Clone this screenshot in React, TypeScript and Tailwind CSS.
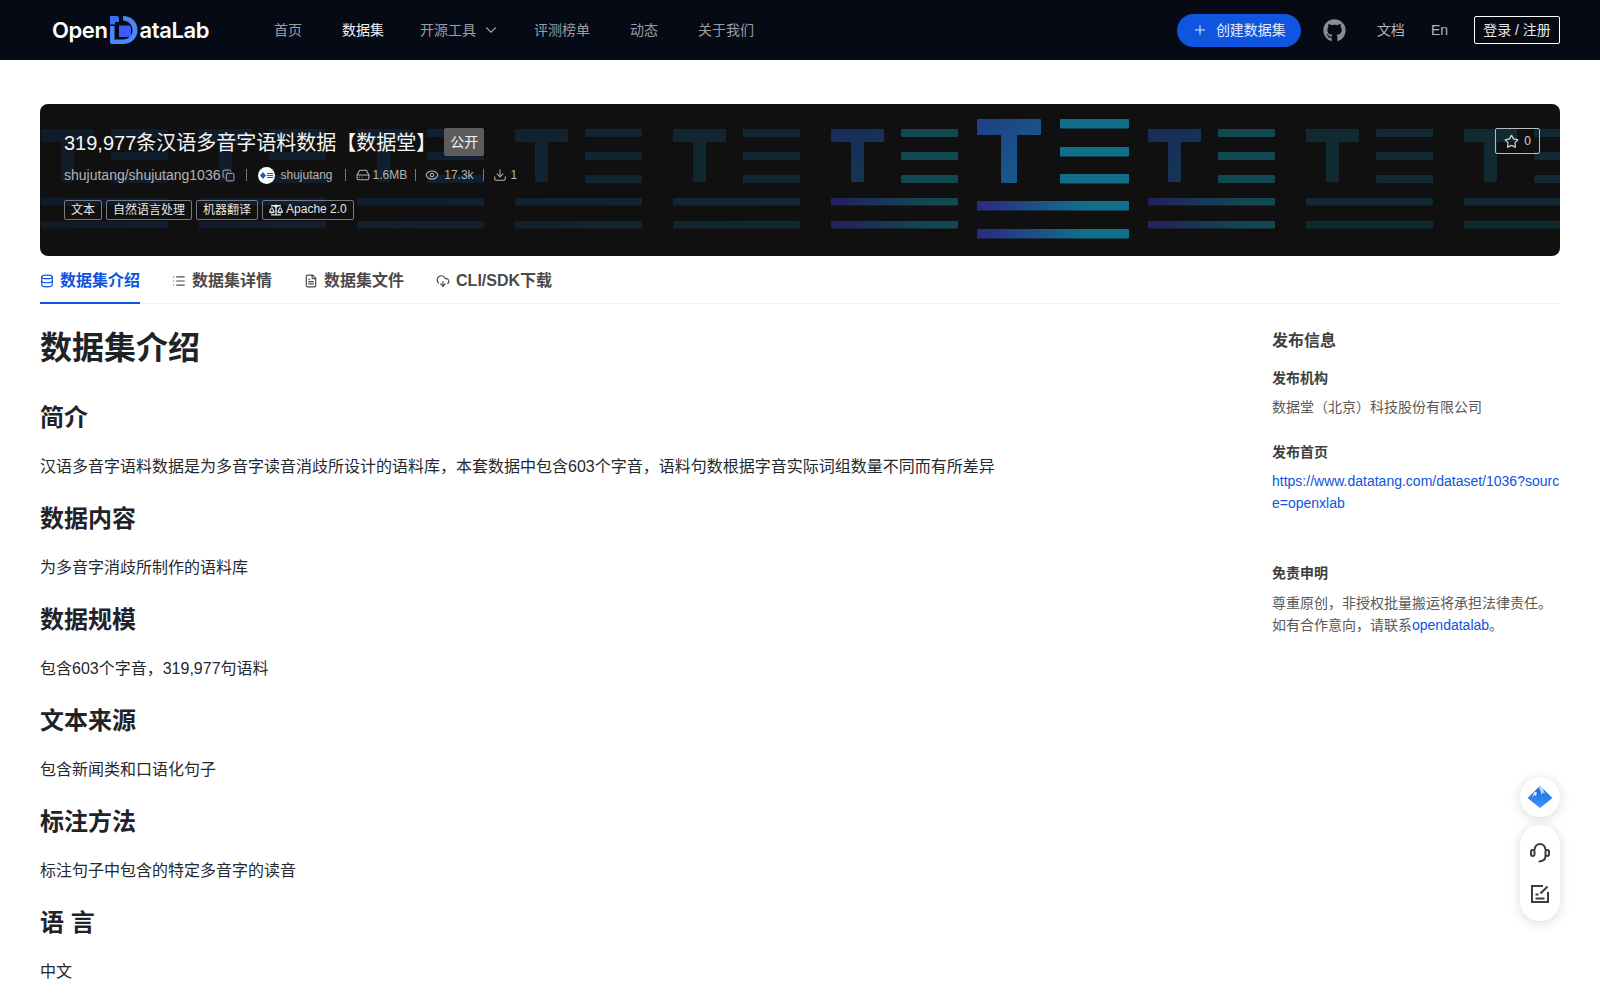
import { ChevronDown, Plus, Star, Copy, HardDrive, Eye, Download, Database, List, FileText, CloudDownload } from "lucide-react";
import { FaGithub, FaBalanceScale } from "react-icons/fa";

const units = [
  { x: 41, o: "#101b2a", e: "#101d2c" },
  { x: 199, o: "#101c2b", e: "#101e2d" },
  { x: 357, o: "#101e2e", e: "#102030" },
  { x: 515, o: "#11212f", e: "#112531" },
  { x: 673, o: "#112630", e: "#112830" },
  { x: 831, o: "#241f5e", e: "#114852" },
  { x: 1148, o: "#241f5e", e: "#114852" },
  { x: 1306, o: "#112a32", e: "#112a32" },
  { x: 1464, o: "#112a32", e: "#112a32" },
];

function BannerArt() {
  return (
    <svg className="absolute left-0 top-0" width="1520" height="152" viewBox="40 104 1520 152">
      <defs>
        {units.map((u, i) => (
          <linearGradient key={i} id={`g${i}`} gradientUnits="userSpaceOnUse" x1={u.x} y1="0" x2={u.x + 127} y2="0">
            <stop offset="0" stopColor={u.o} />
            <stop offset="0.75" stopColor={u.e} />
          </linearGradient>
        ))}
        {units.map((u, i) => (
          <linearGradient key={i} id={`t${i}`} gradientUnits="userSpaceOnUse" x1={u.x} y1="129" x2={u.x + 60} y2="182">
            <stop offset="0" stopColor={i === 5 || i === 6 ? "#1a2a5c" : u.o} />
            <stop offset="1" stopColor={i === 5 || i === 6 ? "#14394f" : u.e} />
          </linearGradient>
        ))}
        <linearGradient id="gc" gradientUnits="userSpaceOnUse" x1="977" y1="0" x2="1129" y2="0">
          <stop offset="0" stopColor="#2b2a80" />
          <stop offset="0.7" stopColor="#116f8a" />
        </linearGradient>
        <linearGradient id="gt" gradientUnits="userSpaceOnUse" x1="977" y1="119" x2="1045" y2="183">
          <stop offset="0" stopColor="#1f3f86" />
          <stop offset="1" stopColor="#15628a" />
        </linearGradient>
      </defs>
      {units.map((u, i) => (
        <g key={i}>
          <g fill={`url(#t${i})`}>
            <rect x={u.x} y="129" width="53" height="13" rx="1" />
            <rect x={u.x + 20} y="129" width="13" height="53" rx="1" />
          </g>
          <g fill={u.e}>
            <rect x={u.x + 70} y="129" width="57" height="8" rx="1" />
            <rect x={u.x + 70} y="152" width="57" height="8" rx="1" />
            <rect x={u.x + 70} y="175" width="57" height="8" rx="1" />
          </g>
          <g fill={`url(#g${i})`}>
            <rect x={u.x} y="198" width="127" height="7.5" rx="1" />
            <rect x={u.x} y="221" width="127" height="7.5" rx="1" />
          </g>
        </g>
      ))}
      <g fill="url(#gt)">
        <rect x="977" y="119" width="64" height="16" rx="1" />
        <rect x="1001" y="119" width="16" height="64" rx="1" />
      </g>
      <g fill="#116f8a">
        <rect x="1060" y="119" width="69" height="9.5" rx="1" />
        <rect x="1060" y="147" width="69" height="9.5" rx="1" />
        <rect x="1060" y="174" width="69" height="9.5" rx="1" />
      </g>
      <g fill="url(#gc)">
        <rect x="977" y="201" width="152" height="9.5" rx="1" />
        <rect x="977" y="229" width="152" height="9.5" rx="1" />
      </g>
    </svg>
  );
}

function LogoMark() {
  return (
    <svg width="28" height="28" viewBox="0 0 28 28" className="shrink-0">
      <path d="M0 10h4.500v13.500h8.500c5.500 0 9.500-4 9.500-9.500S18.500 5 13 4.500V0c8.500 0 14.500 6 14.500 14S21.500 28 13 28H2c-1.200 0-2-.8-2-2z" fill="#4d86f5" />
      <path d="M0 0h7c1.200 0 2 .8 2 2v4H5v2.500H0z" fill="#3a6ff0" />
      <path d="M9 9.500h9.500c1.500 0 2.500 1 2.500 2.500v9H9z" fill="#3c5cf8" />
    </svg>
  );
}

function Tag({ children }: { children: React.ReactNode }) {
  return <span className="flex h-5 items-center rounded-[2px] border border-[#77797b] px-1.5 text-xs text-[#e6e6e6]">{children}</span>;
}

function Section({ title, body }: { title: string; body: string }) {
  return (
    <section>
      <h2 className="flex h-9 items-center text-2xl leading-9 font-bold text-[#1f2328]">{title}</h2>
      <p className="mt-[19px] text-base leading-6 text-[#24292f]">{body}</p>
    </section>
  );
}

export default function App() {
  return (
    <div className="relative h-[1000px] overflow-hidden bg-white font-['Liberation_Sans','Noto_Sans_CJK_SC',sans-serif]">
      <header className="flex h-[60px] items-center bg-[#060a14] pl-[52px] pr-10">
        <div className="flex w-[156px] items-center text-[22px] leading-none font-semibold text-white font-['Inter','Liberation_Sans',sans-serif] tracking-[-0.4px]">
          <span>Open</span>
          <span className="mx-[2px]"><LogoMark /></span>
          <span>ataLab</span>
        </div>
        <nav className="ml-[66px] flex items-center text-sm text-[#9a9da3]">
          <span>首页</span>
          <span className="ml-10 text-[#f2f2f2]">数据集</span>
          <span className="ml-9 flex items-center">
            开源工具
            <ChevronDown className="ml-[6px] h-[18px] w-[18px]" strokeWidth={1.5} />
          </span>
          <span className="ml-[34px]">评测榜单</span>
          <span className="ml-10">动态</span>
          <span className="ml-10">关于我们</span>
        </nav>
        <div className="ml-auto flex items-center text-sm text-[#b4b6ba]">
          <button className="flex h-[33px] w-[124px] items-center justify-center gap-2 rounded-full bg-[#0f55e0] text-[#e6edfb]">
            <Plus className="h-4 w-4" strokeWidth={1.5} />
            创建数据集
          </button>
          <FaGithub className="ml-[22px] h-[23px] w-[23px] text-[#8b8d91]" />
          <span className="ml-[31px]">文档</span>
          <span className="ml-[26px]">En</span>
          <span className="ml-[26px] flex h-7 w-[86px] items-center justify-center rounded-[2px] border border-white text-[#e8e8e8]">登录 / 注册</span>
        </div>
      </header>

      <main className="px-10 pt-11">
        <div className="relative h-[152px] overflow-hidden rounded-lg bg-[#101010]">
          <BannerArt />
          <div className="relative flex justify-between pl-6 pr-5 pt-[25px]">
            <div>
              <div className="flex h-7 items-center">
                <h1 className="text-xl leading-7 text-[#f5f5f5]">319,977条汉语多音字语料数据【数据堂】</h1>
                <span className="ml-2 -mt-[2px] flex h-7 w-10 items-center justify-center rounded-[2px] bg-[#5c5c5c] text-sm text-[#f0f0f0]">公开</span>
              </div>
              <div className="mt-2 flex h-5 items-center text-xs text-[#b4b4b4]">
                <span className="text-sm">shujutang/shujutang1036</span>
                <Copy className="ml-[2px] h-[13px] w-[13px]" strokeWidth={1.8} />
                <span className="ml-[11px] block h-3 w-px bg-[#77797b]" />
                <span className="ml-[11px] flex h-[17px] w-[17px] items-center justify-center rounded-full bg-white">
                  <svg width="13" height="7" viewBox="0 0 13 7">
                    <path d="M3 0 6 3.500 3 7 0 3.500z" fill="#2257b5" />
                    <path d="M7 1.500h6M7 3.500h6M7 5.500h6" stroke="#2257b5" strokeWidth="1" />
                  </svg>
                </span>
                <span className="ml-[5px]">shujutang</span>
                <span className="ml-3 block h-3 w-px bg-[#77797b]" />
                <HardDrive className="ml-[10px] h-[14px] w-[14px]" strokeWidth={1.8} />
                <span className="ml-[3px]">1.6MB</span>
                <span className="ml-2 block h-3 w-px bg-[#77797b]" />
                <Eye className="ml-[9px] h-[14px] w-[14px]" strokeWidth={1.8} />
                <span className="ml-[5px]">17.3k</span>
                <span className="ml-[9px] block h-3 w-px bg-[#77797b]" />
                <Download className="ml-[9px] h-[14px] w-[14px]" strokeWidth={1.8} />
                <span className="ml-1">1</span>
              </div>
              <div className="mt-[15px] flex items-center gap-1">
                <Tag>文本</Tag>
                <Tag>自然语言处理</Tag>
                <Tag>机器翻译</Tag>
                <Tag>
                  <FaBalanceScale className="mr-[3px] h-[14px] w-[14px]" />
                  <span className="-mt-[2px]">Apache 2.0</span>
                </Tag>
              </div>
            </div>
            <span className="-mt-px flex h-[26px] w-[45px] items-center justify-center gap-[5px] rounded-[2px] border border-[#b8bcc0] text-xs text-[#d0d0d0]">
              <Star className="h-[15px] w-[15px]" strokeWidth={2} />
              0
            </span>
          </div>
        </div>

        <div className="flex h-12 gap-8 border-b border-[#f0f0f0] text-base font-bold text-[#4a4a4a]">
          <span className="flex h-12 items-center gap-[6px] border-b-2 border-[#0d53de] pt-[3px] text-[#0d53de]">
            <Database className="h-[14px] w-[14px]" strokeWidth={2} />
            数据集介绍
          </span>
          <span className="flex h-12 items-center gap-[6px] pt-[1px]">
            <List className="h-[14px] w-[14px]" strokeWidth={2} />
            数据集详情
          </span>
          <span className="flex h-12 items-center gap-[6px] pt-[1px]">
            <FileText className="h-[14px] w-[14px]" strokeWidth={2} />
            数据集文件
          </span>
          <span className="flex h-12 items-center gap-[6px] pt-[1px]">
            <CloudDownload className="h-[14px] w-[14px]" strokeWidth={2} />
            CLI/SDK下载
          </span>
        </div>

        <div className="flex justify-between pt-6">
          <article className="flex w-[1100px] flex-col gap-[22px]">
            <h1 className="mb-[10px] flex h-10 items-center text-[32px] font-bold text-[#1f2328]">数据集介绍</h1>
            <Section title="简介" body="汉语多音字语料数据是为多音字读音消歧所设计的语料库，本套数据中包含603个字音，语料句数根据字音实际词组数量不同而有所差异" />
            <Section title="数据内容" body="为多音字消歧所制作的语料库" />
            <Section title="数据规模" body="包含603个字音，319,977句语料" />
            <Section title="文本来源" body="包含新闻类和口语化句子" />
            <Section title="标注方法" body="标注句子中包含的特定多音字的读音" />
            <Section title="语 言" body="中文" />
          </article>
          <aside className="w-[288px] pt-px text-sm text-[#595959]">
            <h3 className="text-base leading-6 font-bold text-[#404040]">发布信息</h3>
            <h4 className="mt-[14px] leading-[22px] font-bold text-[#404040]">发布机构</h4>
            <p className="mt-[7px] leading-[22px]">数据堂（北京）科技股份有限公司</p>
            <h4 className="mt-[23px] leading-[22px] font-bold text-[#404040]">发布首页</h4>
            <p className="mt-[7px] leading-[22px] break-all text-[#0d53de]">https://www.datatang.com/dataset/1036?source=openxlab</p>
            <h4 className="mt-[48px] leading-[22px] font-bold text-[#404040]">免责申明</h4>
            <p className="mt-[8px] leading-[22px]">
              尊重原创，非授权批量搬运将承担法律责任。
              <br />
              如有合作意向，请联系<span className="text-[#0d53de]">opendatalab</span>。
            </p>
          </aside>
        </div>
      </main>

      <div className="absolute right-10 top-[777px] flex w-10 flex-col gap-2">
        <div className="flex h-10 w-10 items-center justify-center rounded-full bg-white shadow-[0_2px_12px_rgba(0,0,0,0.15)]">
          <svg width="26" height="24" viewBox="0 0 26 24">
            <defs>
              <linearGradient id="mt" x1="0" y1="0" x2="0" y2="1">
                <stop offset="0" stopColor="#1a6ae0" />
                <stop offset="1" stopColor="#3d92fa" />
              </linearGradient>
            </defs>
            <path d="M13 1 25.500 13 13 23 .5 13z" fill="url(#mt)" />
            <path d="M13 1 16 4 18 9 16 7.500 14.500 10 13.500 6 12 3z" fill="#dce9fb" opacity="0.85" />
            <path d="M7.500 6.500 5 12.500 7.500 10 9 11 10 7.500z" fill="#eaf2fd" opacity="0.9" />
          </svg>
        </div>
        <div className="flex h-24 w-10 flex-col items-center justify-center gap-[22px] rounded-full bg-white pb-[1px] shadow-[0_2px_12px_rgba(0,0,0,0.15)]">
          <svg width="20" height="20" viewBox="0 0 20 20" fill="none" stroke="#3d3d3d" strokeWidth="2">
            <path d="M4.500 7C4.500 3.500 7 1 10 1s5.500 2.500 5.500 6" />
            <rect x="1" y="7" width="3.500" height="6" rx="1.700" />
            <rect x="15.500" y="7" width="3.500" height="6" rx="1.700" />
            <path d="M15.500 13c0 3-2 5-6 5.500" strokeLinecap="round" />
          </svg>
          <svg width="18" height="18" viewBox="0 0 18 18" fill="none" stroke="#3d3d3d" strokeWidth="2">
            <path d="M12 1H1v16h16V7" />
            <path d="M9.500 8.500 16.500 1.500" />
            <path d="M4.500 9.500h3M4.500 13.500h9" />
          </svg>
        </div>
      </div>
    </div>
  );
}
